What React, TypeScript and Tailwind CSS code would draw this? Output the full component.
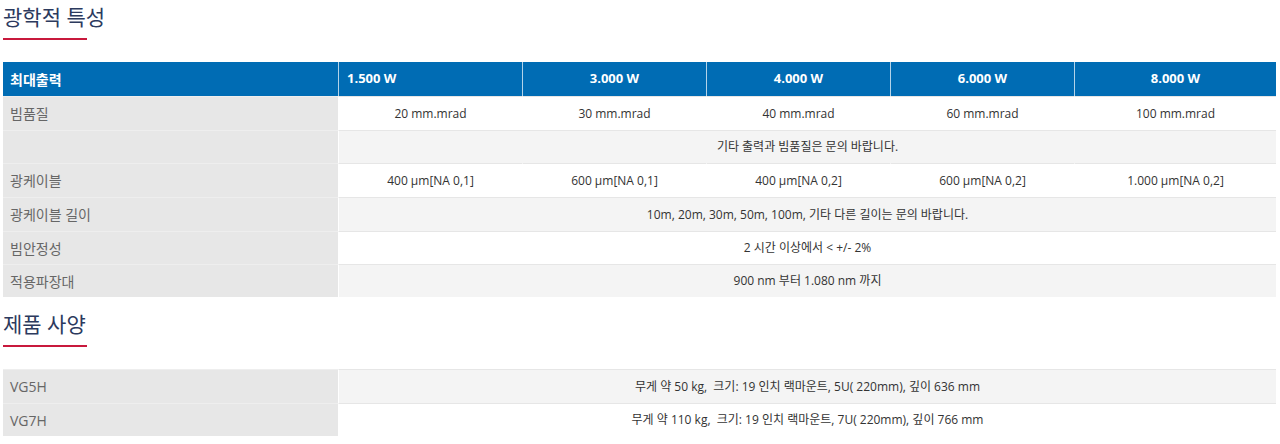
import React from "react";

const font = { fontFamily: '"Open Sans", "Noto Sans CJK KR", sans-serif' };

function Heading({ children }: { children: React.ReactNode }) {
  return (
    <div className="pl-[3px]">
      <div className="h-[38px] pt-[1px] text-[21px] leading-[32px] text-[#2c3a5e]">{children}</div>
      <div className="h-[2px] w-[84px] bg-[#c8193c]" />
    </div>
  );
}

const cols = "grid grid-cols-[335px_184px_184px_184px_184px_202px]";

function LabelCell({ children, h }: { children?: React.ReactNode; h: string }) {
  return (
    <div className={`${h} flex items-center border-t border-[#eeeeee] bg-[#e7e7e7] pl-[7px] text-[14px] text-[#666666]`}>
      {children}
    </div>
  );
}

function DataCell({ children, bg, span }: { children?: React.ReactNode; bg: string; span?: boolean }) {
  return (
    <div
      className={`flex items-center justify-center whitespace-pre border-t border-l border-t-[#e6e6e6] border-l-white text-[12px] text-[#333333] ${bg} ${span ? "col-span-5" : ""}`}
    >
      {children}
    </div>
  );
}

export default function App() {
  const rows: { label: string; values: string[]; h: string; bg: string }[] = [
    { label: "빔품질", values: ["20 mm.mrad", "30 mm.mrad", "40 mm.mrad", "60 mm.mrad", "100 mm.mrad"], h: "h-[34px]", bg: "bg-white" },
    { label: "", values: ["기타 출력과 빔품질은 문의 바랍니다."], h: "h-[33px]", bg: "bg-[#f4f4f4]" },
    { label: "광케이블", values: ["400 µm[NA 0,1]", "600 µm[NA 0,1]", "400 µm[NA 0,2]", "600 µm[NA 0,2]", "1.000 µm[NA 0,2]"], h: "h-[34px]", bg: "bg-white" },
    { label: "광케이블 길이", values: ["10m, 20m, 30m, 50m, 100m, 기타 다른 길이는 문의 바랍니다."], h: "h-[34px]", bg: "bg-[#f4f4f4]" },
    { label: "빔안정성", values: ["2 시간 이상에서 < +/- 2%"], h: "h-[33px]", bg: "bg-white" },
    { label: "적용파장대", values: ["900 nm 부터 1.080 nm 까지"], h: "h-[33px]", bg: "bg-[#f4f4f4]" },
  ];
  const specs = [
    { label: "VG5H", value: "무게 약 50 kg,  크기: 19 인치 랙마운트, 5U( 220mm), 깊이 636 mm", h: "h-[34px]", bg: "bg-[#f4f4f4]" },
    { label: "VG7H", value: "무게 약 110 kg,  크기: 19 인치 랙마운트, 7U( 220mm), 깊이 766 mm", h: "h-[33px]", bg: "bg-white" },
  ];
  return (
    <div className="w-[1280px] h-[444px] overflow-hidden bg-white" style={font}>
      <Heading>광학적 특성</Heading>
      <div className="ml-[3px] mt-[22px] w-[1273px]">
        <div className={`${cols} h-[34px] bg-[#006cb4] text-[13px] font-bold text-white`}>
          <div className="flex items-center pl-[7px] text-[14px]">최대출력</div>
          <div className="flex items-center border-l border-white/70 pl-[8px]">1.500 W</div>
          <div className="flex items-center justify-center border-l border-white/70">3.000 W</div>
          <div className="flex items-center justify-center border-l border-white/70">4.000 W</div>
          <div className="flex items-center justify-center border-l border-white/70">6.000 W</div>
          <div className="flex items-center justify-center border-l border-white/70">8.000 W</div>
        </div>
        {rows.map((r, i) => (
          <div key={i} className={`${cols} ${r.h}`}>
            <LabelCell h={r.h}>{r.label}</LabelCell>
            {r.values.length === 1 ? (
              <DataCell bg={r.bg} span>
                {r.values[0]}
              </DataCell>
            ) : (
              r.values.map((v, j) => (
                <DataCell key={j} bg={r.bg}>
                  {v}
                </DataCell>
              ))
            )}
          </div>
        ))}
      </div>
      <div className="mt-[10px]">
        <Heading>제품 사양</Heading>
      </div>
      <div className="ml-[3px] mt-[22px] w-[1273px]">
        {specs.map((s, i) => (
          <div key={i} className={`${cols} ${s.h}`}>
            <LabelCell h={s.h}>{s.label}</LabelCell>
            <DataCell bg={s.bg} span>
              {s.value}
            </DataCell>
          </div>
        ))}
      </div>
    </div>
  );
}
